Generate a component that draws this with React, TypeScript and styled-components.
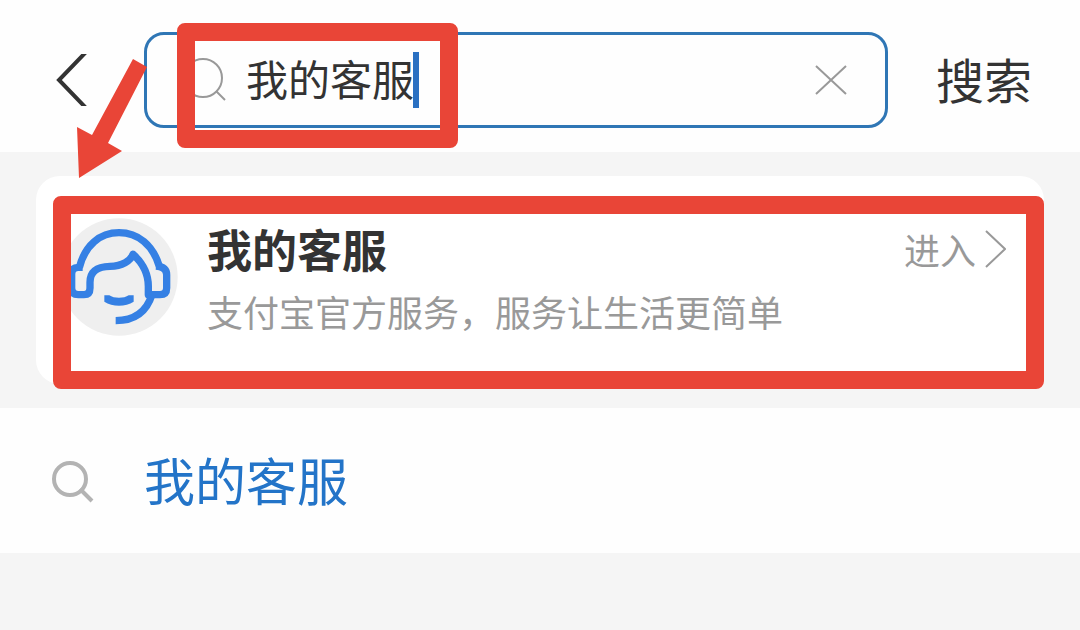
import React, { useState } from 'react';
import styled, { createGlobalStyle } from 'styled-components';

const GlobalStyle = createGlobalStyle`
  * { box-sizing: border-box; }
  body {
    margin: 0;
    background: #f5f5f5;
    font-family: "Noto Sans CJK SC", sans-serif;
    color: #333;
  }
  button, input { font: inherit; color: inherit; }
`;

const Page = styled.div`
  min-height: 100vh;
  background: #f5f5f5;
`;

const Header = styled.form`
  display: flex;
  align-items: center;
  padding: 32px 0 24px;
  background: #fefefe;
`;

const PlainButton = styled.button`
  display: flex;
  align-items: center;
  flex: none;
  border: 0;
  padding: 0;
  background: none;
  cursor: pointer;
`;

const BackButton = styled(PlainButton)`
  width: 144px;
  padding-left: 56px;
`;

const SubmitButton = styled(PlainButton)`
  padding: 0 48px 4px;
  font-size: 48px;
  line-height: 64px;
`;

const Field = styled.div`
  position: relative;
  display: flex;
  align-items: center;
  flex: 1;
  min-width: 0;
  height: 96px;
  padding: 0 38px 0 36px;
  border: 3px solid #2f76b5;
  border-radius: 20px;
`;

const FieldInput = styled.input`
  width: 4em;
  margin-left: 19px;
  padding: 0 0 4px;
  border: 0;
  outline: 0;
  background: none;
  font-size: 42px;
  line-height: 64px;
  caret-color: transparent;
`;

const Caret = styled.span`
  width: 6px;
  height: 56px;
  margin-left: -1px;
  background: #2a70c2;
`;

const ClearButton = styled(PlainButton)`
  margin-left: auto;
`;

const Frame = styled.div`
  position: absolute;
  border: 18px solid #e94537;
  border-radius: 8px;
  pointer-events: none;
`;

const QueryFrame = styled(Frame)`
  top: -12px;
  left: 30px;
  width: 281px;
  height: 125px;
`;

const CardFrame = styled(Frame)`
  top: 20px;
  right: 0;
  bottom: -5px;
  left: 17px;
`;

const Arrow = styled.svg`
  position: absolute;
  top: -118px;
  left: 40px;
  pointer-events: none;
`;

const Results = styled.main`
  padding: 24px 36px;
`;

const Card = styled.article`
  position: relative;
  display: flex;
  align-items: flex-start;
  gap: 29px;
  min-height: 208px;
  padding: 42px 38px 0 24px;
  border-radius: 24px;
  background: #fff;
`;

const CardText = styled.div`
  flex: 1;
  min-width: 0;
`;

const CardTitle = styled.h2`
  margin: 0;
  font-size: 45px;
  font-weight: 700;
  line-height: 62px;
`;

const CardNote = styled.p`
  margin: 0;
  color: #999;
  font-size: 36px;
  line-height: 62px;
`;

const EnterLink = styled.a`
  display: flex;
  align-items: center;
  gap: 6px;
  color: #999;
  font-size: 36px;
  line-height: 62px;
  text-decoration: none;
`;

const Suggestion = styled.a`
  display: flex;
  align-items: center;
  gap: 50px;
  height: 145px;
  padding: 0 50px;
  background: #fefefe;
  color: #2374c8;
  font-size: 51px;
  line-height: 64px;
  text-decoration: none;
`;

const SuggestionText = styled.span`
  padding-bottom: 4px;
`;

const SearchIcon = ({ color, stroke, radius }: { color: string; stroke: number; radius: number }) => (
  <svg width="44" height="44" viewBox="0 0 44 44" fill="none" stroke={color} strokeWidth={stroke} aria-hidden="true">
    <circle cx="20" cy="20" r={radius} />
    <path d={`M${14 + radius} ${14 + radius} 42 42`} />
  </svg>
);

const Avatar = () => (
  <svg width="118" height="118" viewBox="88 143 354 354" fill="none" stroke="#3580e4" strokeWidth="22" aria-hidden="true">
    <circle cx="265" cy="320" r="176" fill="#efefef" stroke="none" />
    <path d="M146 292C163 224 208 187 265 187C322 187 367 224 386 288" />
    <path
      strokeLinejoin="round"
      d="M156 291H143Q123 291 123 311V353Q123 373 143 373H160Q178 373 178 353V336C178 300 204 289 238 288C274 287 300 272 307 252C336 278 353 310 353 348V373H388Q408 373 408 353V313Q408 290 376 287"
    />
    <path d="M364 373C348 424 312 451 255 451" />
    <path d="M221 375H236C250 385 280 385 294 375H309V394C285 410 245 410 221 394Z" fill="#3580e4" stroke="none" />
  </svg>
);

export default function App() {
  const [query, setQuery] = useState('我的客服');

  return (
    <Page>
      <GlobalStyle />
      <Header onSubmit={(e) => e.preventDefault()}>
        <BackButton type="button" aria-label="返回">
          <svg width="32" height="52" viewBox="0 0 32 52" fill="none" stroke="#333" strokeWidth="4" aria-hidden="true">
            <path d="M31 -3 3 26 31 55" />
          </svg>
        </BackButton>
        <Field>
          <SearchIcon color="#999" stroke={2} radius={19} />
          <FieldInput aria-label="搜索内容" value={query} onChange={(e) => setQuery(e.target.value)} />
          <Caret />
          <ClearButton type="button" aria-label="清除" onClick={() => setQuery('')}>
            <svg width="32" height="32" viewBox="0 0 32 32" fill="none" stroke="#999" strokeWidth="2" aria-hidden="true">
              <path d="M1 2 31 30M31 2 1 30" />
            </svg>
          </ClearButton>
          <QueryFrame />
        </Field>
        <SubmitButton type="submit">搜索</SubmitButton>
      </Header>

      <Results>
        <Card>
          <Avatar />
          <CardText>
            <CardTitle>我的客服</CardTitle>
            <CardNote>支付宝官方服务，服务让生活更简单</CardNote>
          </CardText>
          <EnterLink href="#service">
            进入
            <svg width="24" height="38" viewBox="0 0 24 38" fill="none" stroke="#999" strokeWidth="2" aria-hidden="true">
              <path d="M4 1 23 19 4 37" />
            </svg>
          </EnterLink>
          <CardFrame />
          <Arrow width="72" height="122" viewBox="0 0 72 122" fill="#e94537" aria-hidden="true">
            <path d="M57 1 71 9 32 85 46 93 3 120 1 69 16 77Z" />
          </Arrow>
        </Card>
      </Results>

      <Suggestion href="#search">
        <SearchIcon color="#b3b3b3" stroke={4} radius={16} />
        <SuggestionText>我的客服</SuggestionText>
      </Suggestion>
    </Page>
  );
}
